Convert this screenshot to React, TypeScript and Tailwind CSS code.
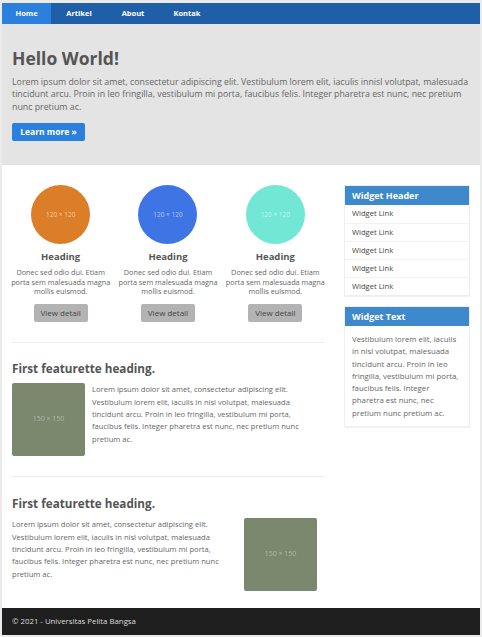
import React from "react";

const lorem =
  "Lorem ipsum dolor sit amet, consectetur adipiscing elit. Vestibulum lorem elit, iaculis in nisl volutpat, malesuada tincidunt arcu. Proin in leo fringilla, vestibulum mi porta, faucibus felis. Integer pharetra est nunc, nec pretium nunc pretium ac.";

function Circle({ color, title }: { color: string; title: string }) {
  return (
    <div className="flex flex-col items-center px-[5px] text-center">
      <div
        className={`flex h-[59px] w-[59px] items-center justify-center rounded-full ${color}`}
      >
        <span className="text-[6.5px] text-white/60">120 × 120</span>
      </div>
      <h3 className="mt-[7px] text-[9.5px] font-bold leading-[12px] text-[#555]">{title}</h3>
      <p className="mt-[5px] w-[100px] text-[7.3px] leading-[9.7px] text-[#666]">
        Donec sed odio dui. Etiam porta sem malesuada magna mollis euismod.
      </p>
      <button className="mt-[7px] h-[18px] w-[54px] rounded-[2px] bg-[#b3b3b3] text-[8px] text-[#444]">
        View detail
      </button>
    </div>
  );
}

function Placeholder() {
  return (
    <div className="flex h-[73px] w-[73px] shrink-0 items-center justify-center rounded-[2px] bg-[#7b886d]">
      <span className="text-[7px] text-white/40">150 × 150</span>
    </div>
  );
}

export default function App() {
  const navItems = [
    { label: "Home", w: "w-[49px]", active: true },
    { label: "Artikel", w: "w-[56px]", active: false },
    { label: "About", w: "w-[52px]", active: false },
    { label: "Kontak", w: "w-[56px]", active: false },
  ];
  return (
    <div
      className="min-h-[637px] bg-[#ebebeb] pb-[2px] pl-[2px] pr-[2px] pt-[3px]"
      style={{ fontFamily: '"Open Sans", "Noto Sans", sans-serif' }}
    >
      <div className="bg-white">
        {/* Nav */}
        <nav className="flex h-[21px] bg-[#1f5fa8]">
          {navItems.map((n) => (
            <div
              key={n.label}
              className={`flex items-center justify-center ${n.w} text-[7.5px] font-bold text-white ${
                n.active ? "bg-[#2b80de]" : ""
              }`}
            >
              {n.label}
            </div>
          ))}
        </nav>

        {/* Jumbotron */}
        <section className="bg-[#e4e4e4] px-[10px] pb-[24px] pt-[22px]">
          <h1 className="text-[17.5px] font-bold leading-[24px] text-[#555]">Hello World!</h1>
          <p className="mt-[5.5px] text-[8.8px] leading-[12.5px] text-[#666]">
            Lorem ipsum dolor sit amet, consectetur adipiscing elit. Vestibulum lorem elit, iaculis innisl volutpat, malesuada tincidunt arcu. Proin in leo fringilla, vestibulum mi porta, faucibus felis. Integer pharetra est nunc, nec pretium nunc pretium ac.
          </p>
          <button className="mt-[10px] h-[18px] w-[73px] rounded-[2px] bg-[#2b80de] text-[8.5px] font-bold text-white">
            Learn more »
          </button>
        </section>

        {/* Main */}
        <div className="flex gap-[20px] px-[10px] pb-[17px] pt-[20px]">
          <main className="w-[312px]">
            <div className="-mx-[5px] grid grid-cols-3">
              <Circle color="bg-[#db7e27]" title="Heading" />
              <Circle color="bg-[#3e74e4]" title="Heading" />
              <Circle color="bg-[#72e7d6]" title="Heading" />
            </div>

            <hr className="mt-[20px] border-[#eeeeee]" />

            <h2 className="mt-[17.5px] text-[11.7px] font-bold leading-[15px] text-[#555]">
              First featurette heading.
            </h2>
            <div className="mt-[7.5px] flex gap-[7px]">
              <Placeholder />
              <p className="w-[218px] text-[7.6px] leading-[12.4px] text-[#666]">{lorem}</p>
            </div>

            <hr className="mt-[20px] border-[#eeeeee]" />

            <h2 className="mt-[18.5px] text-[11.7px] font-bold leading-[15px] text-[#555]">
              First featurette heading.
            </h2>
            <div className="mt-[7.5px] flex justify-between">
              <p className="w-[226px] text-[7.6px] leading-[12.4px] text-[#666]">{lorem}</p>
              <div className="mr-[7px]">
                <Placeholder />
              </div>
            </div>
          </main>

          <aside className="w-[126px]">
            <div className="border border-[#eeeeee] shadow-[0_1px_1px_rgba(0,0,0,0.05)]">
              <div className="flex h-[19px] items-center bg-[#3e88cc] px-[7px] text-[9px] font-bold text-white">
                Widget Header
              </div>
              {[0, 1, 2, 3, 4].map((i) => (
                <div
                  key={i}
                  className={`flex h-[18px] items-center px-[7px] text-[7.6px] text-[#444] ${
                    i > 0 ? "border-t border-[#f2f2f2]" : ""
                  }`}
                >
                  Widget Link
                </div>
              ))}
            </div>

            <div className="mt-[10px] border border-[#eeeeee] shadow-[0_1px_1px_rgba(0,0,0,0.05)]">
              <div className="flex h-[19px] items-center bg-[#3e88cc] px-[7px] text-[9px] font-bold text-white">
                Widget Text
              </div>
              <p className="px-[7px] pb-[7px] pt-[7px] text-[7.8px] leading-[12.3px] text-[#666]">
                Vestibulum lorem elit, iaculis in nisl volutpat, malesuada tincidunt arcu. Proin in leo fringilla, vestibulum mi porta, faucibus felis. Integer pharetra est nunc, nec pretium nunc pretium ac.
              </p>
            </div>
          </aside>
        </div>

        {/* Footer */}
        <footer className="flex h-[27px] items-center bg-[#1f1f1f] px-[10px] text-[7.8px] text-[#ddd]">
          © 2021 - Universitas Pelita Bangsa
        </footer>
      </div>
    </div>
  );
}
